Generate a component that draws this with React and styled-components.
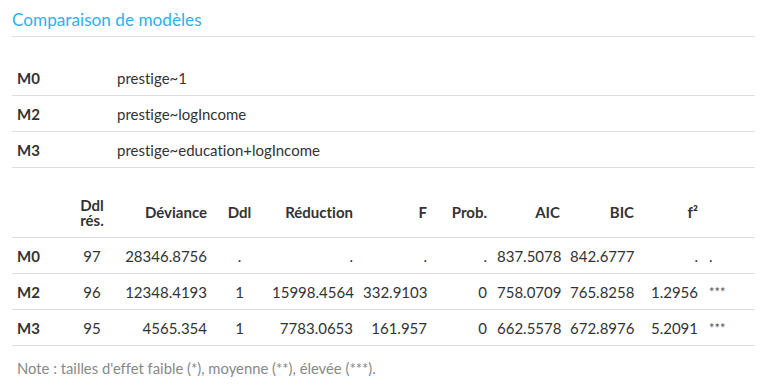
import React from "react";
import styled, { createGlobalStyle } from "styled-components";

const Global = createGlobalStyle`
  html, body { margin: 0; padding: 0; background: #fff; }
  body {
    font-family: Lato, "Open Sans", sans-serif;
    color: #333;
    font-variant-ligatures: no-common-ligatures;
  }
`;

const Page = styled.div`
  padding: 0 17px 0 12px;
  width: 743px;
`;

const Title = styled.h1`
  margin: 0;
  padding: 8px 0 4px;
  font-size: 17.2px;
  line-height: 24px;
  font-weight: 400;
  color: #2cb1ef;
  border-bottom: 1px solid #dedede;
`;

const ModelTable = styled.div`
  margin-top: 23px;
`;

const Row = styled.div`
  display: grid;
  grid-template-columns: ${(p) => p.$cols};
  align-items: center;
  min-height: ${(p) => p.$h || 35}px;
  border-bottom: 1px solid #dedede;
  font-size: 15px;
`;

const Cell = styled.div`
  padding: 0 ${(p) => (p.$pr != null ? p.$pr : 5)}px 0 ${(p) => (p.$pl != null ? p.$pl : 5)}px;
  text-align: ${(p) => p.$align || "left"};
  font-weight: ${(p) => (p.$bold ? 700 : 400)};
  color: ${(p) => p.$color || "#333"};
  font-size: ${(p) => p.$size || 15}px;
  line-height: ${(p) => p.$lh || 20}px;
  white-space: nowrap;
`;

const StatsTable = styled.div`
  margin-top: 20px;
`;

const Note = styled.div`
  padding: 12px 5px;
  font-size: 14.8px;
  line-height: 20px;
  color: #888;
`;

const MODEL_COLS = "100px 1fr";
const STAT_COLS = "60px 40px 100px 55px 91px 74px 60px 73px 74px 64px 1fr";

const models = [
  ["M0", "prestige~1"],
  ["M2", "prestige~logIncome"],
  ["M3", "prestige~education+logIncome"],
];

const headers = [
  { t: "", a: "left" },
  { t: ["Ddl", "rés."], a: "center" },
  { t: "Déviance", a: "right" },
  { t: "Ddl", a: "center" },
  { t: "Réduction", a: "right" },
  { t: "F", a: "right" },
  { t: "Prob.", a: "right" },
  { t: "AIC", a: "right" },
  { t: "BIC", a: "right" },
  { t: "f²", a: "right" },
];

const rows = [
  ["M0", "97", "28346.8756", ".", ".", ".", ".", "837.5078", "842.6777", ".", "."],
  ["M2", "96", "12348.4193", "1", "15998.4564", "332.9103", "0", "758.0709", "765.8258", "1.2956", "***"],
  ["M3", "95", "4565.354", "1", "7783.0653", "161.957", "0", "662.5578", "672.8976", "5.2091", "***"],
];

export default function App() {
  return (
    <Page>
      <Global />
      <Title>Comparaison de modèles</Title>
      <ModelTable>
        {models.map(([m, f]) => (
          <Row key={m} $cols={MODEL_COLS}>
            <Cell $bold>{m}</Cell>
            <Cell>{f}</Cell>
          </Row>
        ))}
      </ModelTable>
      <StatsTable>
        <Row $cols={STAT_COLS} $h={49}>
          {headers.map((h, i) => (
            <Cell key={i} $bold $align={h.a} $lh={15}>
              {Array.isArray(h.t) ? (
                <>
                  {h.t[0]}
                  <br />
                  {h.t[1]}
                </>
              ) : (
                h.t
              )}
            </Cell>
          ))}
          <Cell />
        </Row>
        {rows.map((r) => (
          <Row key={r[0]} $cols={STAT_COLS}>
            {r.map((v, i) => {
              if (i === 0) return <Cell key={i} $bold>{v}</Cell>;
              if (i === 10)
                return (
                  <Cell key={i} $pl={6} $size={v === "." ? 15 : 13} $color={v === "." ? "#333" : "#555"}>
                    {v}
                  </Cell>
                );
              return (
                <Cell key={i} $align={headers[i].a}>
                  {v}
                </Cell>
              );
            })}
          </Row>
        ))}
      </StatsTable>
      <Note>Note : tailles d'effet faible (*), moyenne (**), élevée (***).</Note>
    </Page>
  );
}
